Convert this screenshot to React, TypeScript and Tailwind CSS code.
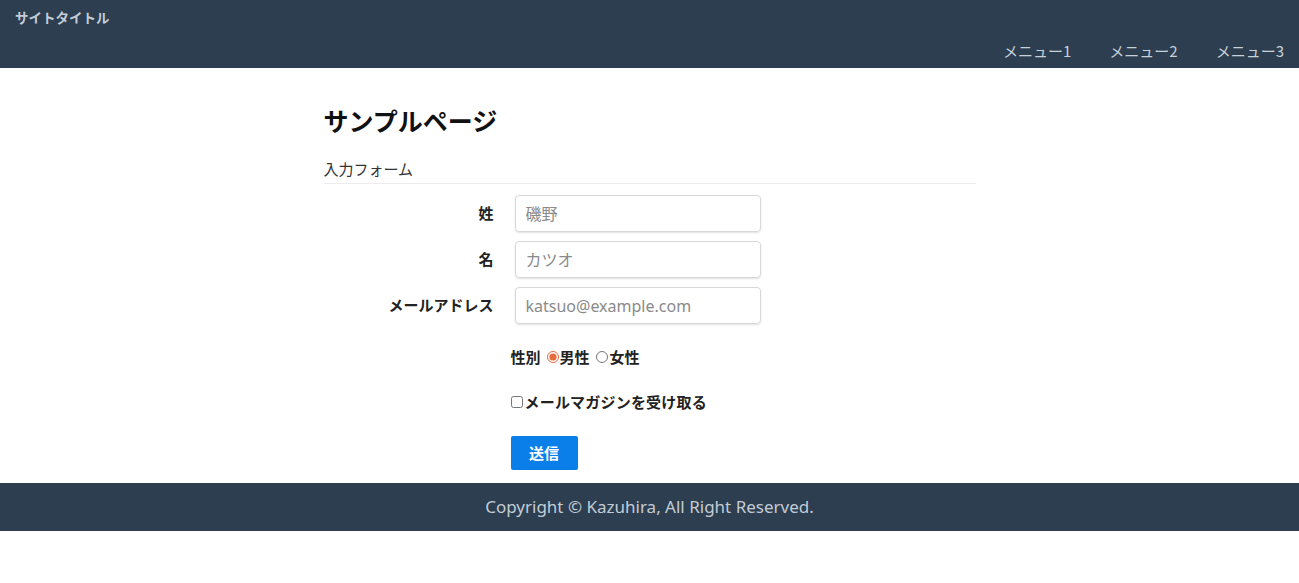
import React from 'react';

const font = { fontFamily: '"Noto Sans CJK JP", "Noto Sans", sans-serif' };

function Field({ label, placeholder }: { label: string; placeholder: string }) {
  return (
    <div className="flex items-center">
      <label className="w-[170px] text-right text-[15px] font-bold text-[#222]">{label}</label>
      <input
        className="ml-[21px] h-[37px] w-[246px] rounded-[4px] border border-[#d8d8d8] px-[10px] text-[16px] shadow-[0_1px_2px_rgba(0,0,0,0.12)] outline-none placeholder:text-[#8a8a8a]"
        style={{ fontFamily: '"Noto Sans", "Noto Sans CJK JP", sans-serif' }}
        placeholder={placeholder}
      />
    </div>
  );
}

export default function App() {
  return (
    <div className="min-h-[583px] bg-white" style={font}>
      {/* ヘッダー */}
      <header className="h-[68px] bg-[#2c3e50] px-[15px]">
        <div className="pt-[6px] text-[13.5px] font-bold leading-[22px] text-[#c3ccd6]">サイトタイトル</div>
        <nav className="mt-[12px] flex justify-end gap-[38px] text-[15px] leading-[22px] text-[#c8d1da]">
          <a>メニュー1</a>
          <a>メニュー2</a>
          <a>メニュー3</a>
        </nav>
      </header>

      {/* メイン */}
      <main className="mx-auto w-[652px] pt-[34px] pb-[13px]">
        <h1 className="text-[25px] font-bold leading-[36px] text-[#111]">サンプルページ</h1>
        <h2 className="mt-[19px] border-b border-[#ececec] pb-[2px] text-[15px] leading-[24px] text-[#333]">入力フォーム</h2>

        <form className="mt-[11px] flex flex-col gap-[9px]">
          <Field label="姓" placeholder="磯野" />
          <Field label="名" placeholder="カツオ" />
          <Field label="メールアドレス" placeholder="katsuo@example.com" />

          <div className="ml-[187px] mt-[12px] flex items-center text-[15px] font-bold leading-[24px] text-[#222]">
            <span className="mr-[6px]">性別</span>
            <input type="radio" name="sex" defaultChecked className="m-0 h-[12px] w-[12px] accent-[#e66a3c]" />
            <span className="ml-[1px]">男性</span>
            <input type="radio" name="sex" className="m-0 ml-[6px] h-[12px] w-[12px]" />
            <span className="ml-[2px]">女性</span>
          </div>

          <div className="ml-[187px] mt-[12px] flex items-center text-[15px] font-bold leading-[24px] text-[#222]">
            <input type="checkbox" className="m-0 mr-[2px] h-[12px] w-[12px]" />
            <span className="tracking-[0.2px]">メールマガジンを受け取る</span>
          </div>

          <div className="ml-[187px] mt-[13px]">
            <button
              type="button"
              className="h-[34px] w-[67px] rounded-[2px] bg-[#0b7fe9] text-[15px] font-semibold text-white"
            >
              送信
            </button>
          </div>
        </form>
      </main>

      {/* フッター */}
      <footer
        className="flex h-[48px] items-center justify-center bg-[#2c3e50] text-[17px] text-[#c3ccd6]"
        style={{ fontFamily: '"Noto Sans", "Noto Sans CJK JP", sans-serif' }}
      >
        Copyright © Kazuhira, All Right Reserved.
      </footer>
    </div>
  );
}
